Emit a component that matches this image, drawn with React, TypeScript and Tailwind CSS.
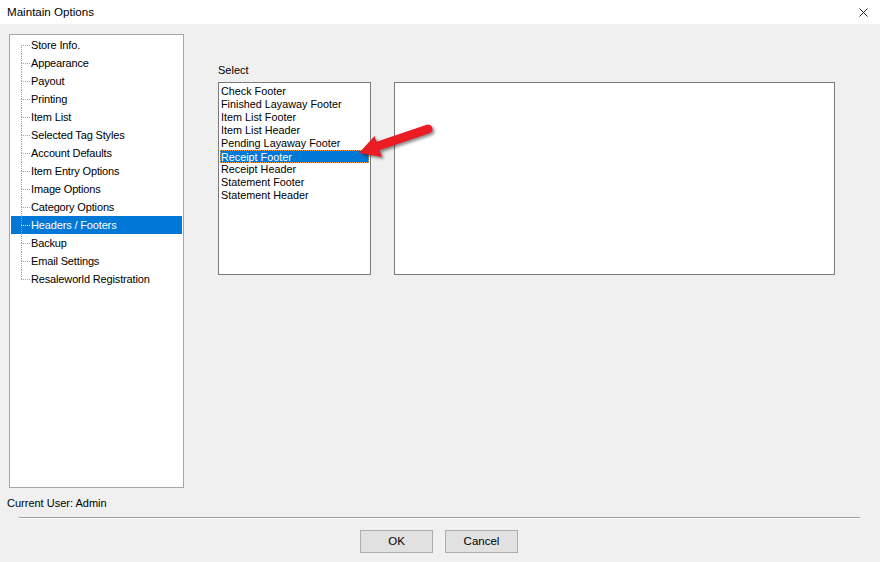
import { X } from 'lucide-react'

const treeItems = [
  'Store Info.',
  'Appearance',
  'Payout',
  'Printing',
  'Item List',
  'Selected Tag Styles',
  'Account Defaults',
  'Item Entry Options',
  'Image Options',
  'Category Options',
  'Headers / Footers',
  'Backup',
  'Email Settings',
  'Resaleworld Registration',
]

const listItems = [
  'Check Footer',
  'Finished Layaway Footer',
  'Item List Footer',
  'Item List Header',
  'Pending Layaway Footer',
  'Receipt Footer',
  'Receipt Header',
  'Statement Footer',
  'Statement Header',
]

function Connector({ first, last, selected }: { first: boolean; last: boolean; selected: boolean }) {
  const c = selected ? '#ffffff' : '#a0a0a0'
  return (
    <svg width="10" height="18" className="shrink-0">
      {!first && <line x1="0.5" y1="0" x2="0.5" y2="9" stroke="#a0a0a0" strokeDasharray="1 1" />}
      {!last && <line x1="0.5" y1="9" x2="0.5" y2="18" stroke="#a0a0a0" strokeDasharray="1 1" />}
      <line x1="0" y1="9.5" x2="9" y2="9.5" stroke={c} strokeDasharray="1 1" />
    </svg>
  )
}

export default function App() {
  return (
    <div
      className="relative flex h-[562px] w-[880px] flex-col overflow-hidden bg-[#f0f0f0] text-black"
      style={{ fontFamily: '"Liberation Sans", Arial, sans-serif' }}
    >
      {/* Title bar */}
      <div className="flex h-[24px] shrink-0 items-center justify-between bg-white pl-[7px] pr-[9px] text-[11.6px]">
        <span>Maintain Options</span>
        <X className="size-[15px]" strokeWidth={1.3} />
      </div>

      {/* Content */}
      <div className="flex pl-[9px] pt-[10px]">
        {/* Tree */}
        <div className="h-[454px] w-[175px] shrink-0 border border-[#a6a6a6] bg-white p-px text-[11px] tracking-[-0.15px]">
          {treeItems.map((t, i) => {
            const sel = t === 'Headers / Footers'
            return (
              <div
                key={t}
                className={`flex h-[18px] items-center ${sel ? 'bg-[#0078d7] text-white' : ''}`}
              >
                <span className="w-[10px] shrink-0" />
                <Connector first={i === 0} last={i === treeItems.length - 1} selected={sel} />
                <span className="leading-none">{t}</span>
              </div>
            )
          })}
        </div>

        {/* Right side */}
        <div className="ml-[34px] flex flex-col pt-[29px]">
          <div className="h-[15px] text-[11px] leading-[15px]">Select</div>
          <div className="mt-[4px] flex gap-[23px]">
            <div className="h-[193px] w-[153px] border border-[#7a7a7a] bg-white pt-[2px] text-[10.8px]">
              {listItems.map((t) => {
                const sel = t === 'Receipt Footer'
                return (
                  <div
                    key={t}
                    className={`mx-px h-[13px] whitespace-nowrap leading-[13px] ${
                      sel
                        ? 'border border-dotted border-[#f0a040] bg-[#0078d7] px-0 leading-[10px] text-white'
                        : 'px-px'
                    }`}
                  >
                    {t}
                  </div>
                )
              })}
            </div>
            <div className="h-[193px] w-[441px] border border-[#7a7a7a] bg-white" />
          </div>
        </div>
      </div>

      <div className="ml-[7px] mt-[8px] text-[11px] leading-[15px]">Current User: Admin</div>

      <div className="ml-[19px] mt-[6px] w-[841px] border-t border-b border-t-[#a0a0a0] border-b-white" />

      <div className="ml-[360px] mt-[11px] flex gap-[12px] text-[11.5px]">
        <button className="h-[23px] w-[73px] border border-[#adadad] bg-[#e1e1e1]">OK</button>
        <button className="h-[23px] w-[73px] border border-[#adadad] bg-[#e1e1e1]">Cancel</button>
      </div>

      {/* Red annotation arrow */}
      <svg
        className="pointer-events-none absolute left-[350px] top-[115px]"
        width="90"
        height="50"
        style={{ filter: 'drop-shadow(2px 2px 1.5px rgba(0,0,0,0.45))' }}
      >
        <line x1="78" y1="14" x2="28" y2="31" stroke="#ec1c24" strokeWidth="9" strokeLinecap="round" />
        <polygon points="9,38 32,42 24.5,21" fill="#ec1c24" />
      </svg>
    </div>
  )
}
